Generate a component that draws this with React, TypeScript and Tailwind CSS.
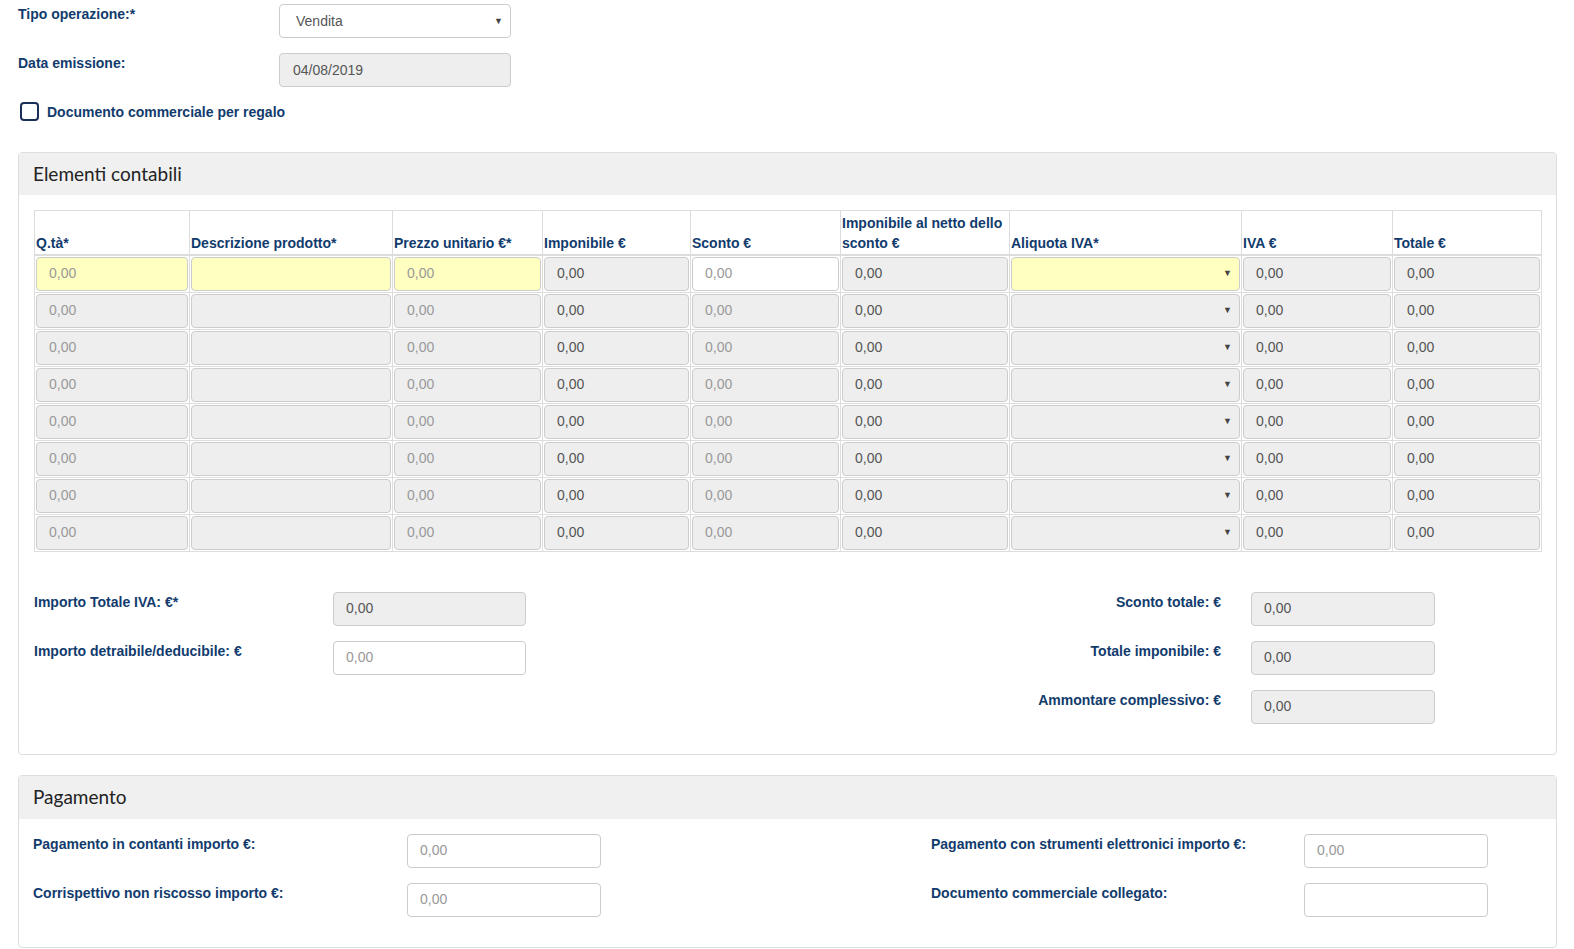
import React from "react";

const labelCls = "text-[14px] font-bold text-[#123b6d] leading-[18px]";
const boxBase = "h-[34px] rounded-[4px] border text-[14px] flex items-center pl-[12px]";
const ro = "bg-[#eeeeee] border-[#cccccc] text-[#555555]";
const ed = "bg-white border-[#cccccc] text-[#999999]";

function Box({ value, kind = "ro", className = "" }: { value?: string; kind?: "ro" | "ed"; className?: string }) {
  return <div className={`${boxBase} ${kind === "ro" ? ro : ed} ${className}`}>{value}</div>;
}

const cols = [155, 203, 150, 148, 150, 169, 232, 151, 149];
const headers = [
  "Q.tà*",
  "Descrizione prodotto*",
  "Prezzo unitario €*",
  "Imponibile €",
  "Sconto €",
  "Imponibile al netto dello sconto €",
  "Aliquota IVA*",
  "IVA €",
  "Totale €",
];

function Cell({ row, col }: { row: number; col: number }) {
  const first = row === 0;
  const yellow = first && (col === 0 || col === 1 || col === 2 || col === 6);
  const white = first && col === 4;
  let bg = "bg-[#eeeeee]";
  if (yellow) bg = "bg-[#ffffc0]";
  if (white) bg = "bg-white";
  const placeholder = col === 0 || col === 2 || col === 4;
  const value = col === 1 || col === 6 ? "" : "0,00";
  return (
    <td className="border border-[#dddddd] p-[1px] align-middle">
      <div
        className={`relative h-[34px] rounded-[4px] border border-[#cccccc] ${bg} flex items-center pl-[12px] text-[14px] ${
          placeholder ? "text-[#999999]" : "text-[#555555]"
        }`}
      >
        {value}
        {col === 6 && <span className="absolute right-[7px] top-[9px] text-[9px] text-[#444]">▼</span>}
      </div>
    </td>
  );
}

function Panel({ title, headH, children }: { title: string; headH: string; children: React.ReactNode }) {
  return (
    <div className="border border-[#dddddd] rounded-[4px] bg-white">
      <div className={`${headH} bg-[#f0f0f0] flex items-center pl-[14px] text-[19px] text-[#222222]`} style={{ fontFamily: "Lato, 'Noto Sans', sans-serif" }}>
        {title}
      </div>
      {children}
    </div>
  );
}

function RightRow({ label }: { label: string }) {
  return (
    <div className="flex">
      <div className={`${labelCls} text-right w-[220px] mr-[30px] pt-[1px]`}>{label}</div>
      <div className="w-[184px]">
        <Box value="0,00" />
      </div>
    </div>
  );
}

function Field({ label, labelW, inputW, value, kind }: { label: string; labelW: string; inputW: string; value: string; kind: "ro" | "ed" }) {
  return (
    <div className="flex">
      <div className={`${labelCls} ${labelW} pt-[1px]`}>{label}</div>
      <div className={inputW}>
        <Box value={value} kind={kind} />
      </div>
    </div>
  );
}

export default function App() {
  return (
    <div className="min-h-screen bg-white pl-[18px] pr-[17px] pt-[4px] pb-[2px]" style={{ fontFamily: "'Liberation Sans', Arial, sans-serif" }}>
      {/* top fields */}
      <div className="flex flex-col gap-[15px]">
        <div className="flex">
          <div className={`${labelCls} w-[261px] pt-[1px]`}>Tipo operazione:*</div>
          <div className="relative w-[232px] h-[34px] rounded-[4px] border border-[#cccccc] bg-white flex items-center pl-[16px] text-[14px] text-[#555555]">
            Vendita
            <span className="absolute right-[7px] top-[10px] text-[9px] text-[#444]">▼</span>
          </div>
        </div>
        <div className="flex">
          <div className={`${labelCls} w-[261px] pt-[1px]`}>Data emissione:</div>
          <div className="w-[232px] h-[34px] rounded-[4px] border border-[#cccccc] bg-[#eeeeee] flex items-center pl-[13px] text-[14px] text-[#555555]">
            04/08/2019
          </div>
        </div>
      </div>
      <div className="flex items-center mt-[15px] ml-[2px]">
        <div className="w-[19px] h-[19px] rounded-[4px] border-2 border-[#1a2f55]" />
        <span className={`${labelCls} ml-[8px]`}>Documento commerciale per regalo</span>
      </div>

      <div className="mt-[31px]">
        <Panel title="Elementi contabili" headH="h-[42px]">
          <div className="px-[15px] pt-[15px] pb-[30px]">
            <table className="border-collapse table-fixed w-[1507px]">
              <colgroup>
                {cols.map((w, i) => (
                  <col key={i} style={{ width: w }} />
                ))}
              </colgroup>
              <thead>
                <tr className="h-[44px]">
                  {headers.map((h) => (
                    <th
                      key={h}
                      className="border border-[#dddddd] border-b-2 align-bottom text-left font-bold text-[14px] leading-[20px] text-[#123b6d] pl-[1px] pr-[4px] pb-[1px]"
                    >
                      {h}
                    </th>
                  ))}
                </tr>
              </thead>
              <tbody>
                {Array.from({ length: 8 }).map((_, r) => (
                  <tr key={r}>
                    {cols.map((_, c) => (
                      <Cell key={c} row={r} col={c} />
                    ))}
                  </tr>
                ))}
              </tbody>
            </table>

            <div className="flex justify-between mt-[40px]">
              <div className="flex flex-col gap-[15px]">
                <Field label="Importo Totale IVA: €*" labelW="w-[299px]" inputW="w-[193px]" value="0,00" kind="ro" />
                <Field label="Importo detraibile/deducibile: €" labelW="w-[299px]" inputW="w-[193px]" value="0,00" kind="ed" />
              </div>
              <div className="flex flex-col gap-[15px] mr-[106px]">
                <RightRow label="Sconto totale: €" />
                <RightRow label="Totale imponibile: €" />
                <RightRow label="Ammontare complessivo: €" />
              </div>
            </div>
          </div>
        </Panel>
      </div>

      <div className="mt-[20px]">
        <Panel title="Pagamento" headH="h-[43px]">
          <div className="px-[14px] pt-[15px] pb-[30px] flex">
            <div className="w-[898px] flex flex-col gap-[15px]">
              <Field label="Pagamento in contanti importo €:" labelW="w-[374px]" inputW="w-[194px]" value="0,00" kind="ed" />
              <Field label="Corrispettivo non riscosso importo €:" labelW="w-[374px]" inputW="w-[194px]" value="0,00" kind="ed" />
            </div>
            <div className="flex flex-col gap-[15px]">
              <Field label="Pagamento con strumenti elettronici importo €:" labelW="w-[373px]" inputW="w-[184px]" value="0,00" kind="ed" />
              <Field label="Documento commerciale collegato:" labelW="w-[373px]" inputW="w-[184px]" value="" kind="ed" />
            </div>
          </div>
        </Panel>
      </div>
    </div>
  );
}
